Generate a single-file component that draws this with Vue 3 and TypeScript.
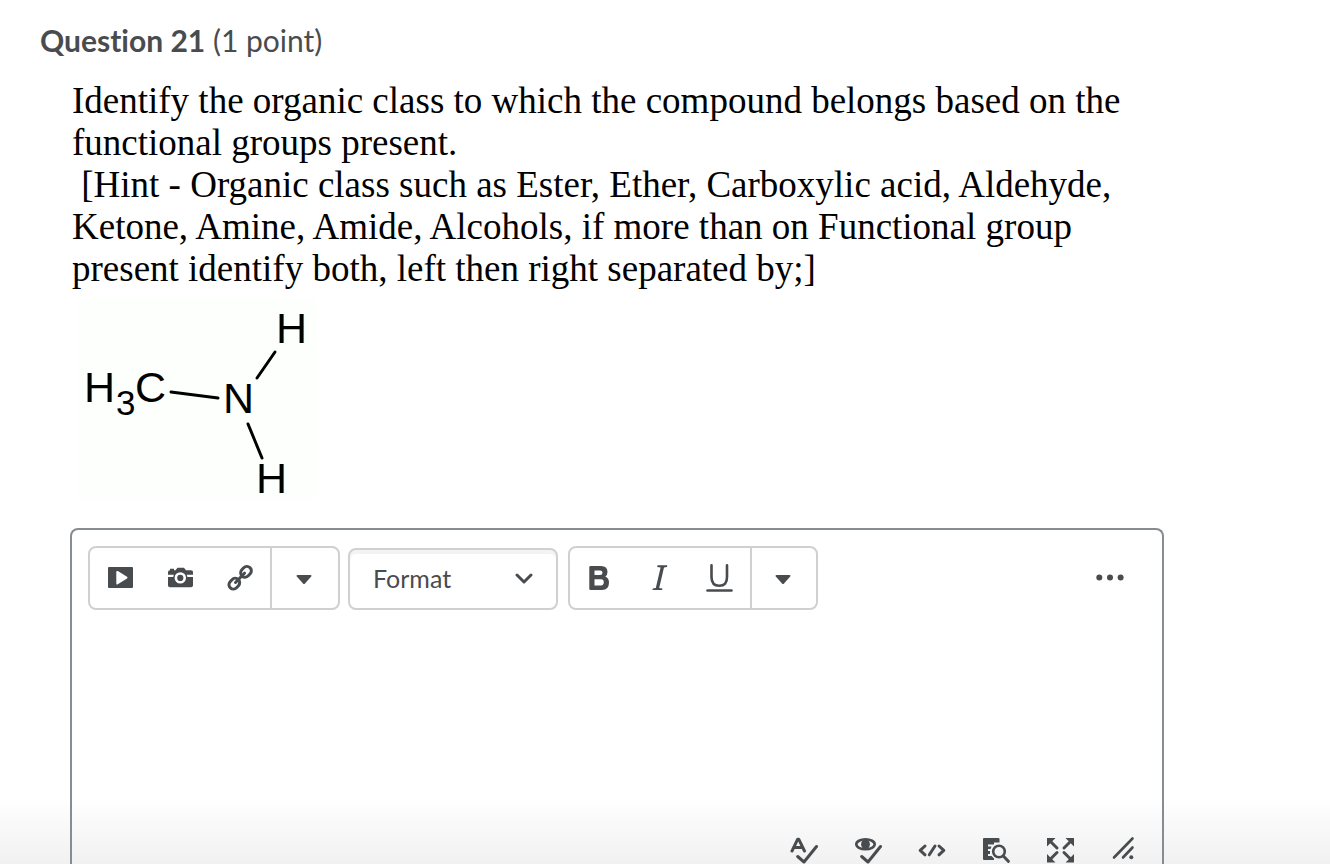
<script setup lang="ts">
import { ref } from 'vue'

const answer = ref('')
const format = ref('Format')
const formats: string[] = ['Format', 'Paragraph', 'Heading 1', 'Heading 2', 'Heading 3']
</script>

<template>
  <main class="page">
    <h2 class="title"><strong>Question 21</strong> (1 point)</h2>

    <section class="prompt">
      <p>Identify the organic class to which the compound belongs based on the functional groups present.</p>
      <p>&nbsp;[Hint - Organic class such as Ester, Ether, Carboxylic acid, Aldehyde, Ketone, Amine, Amide, Alcohols, if more than on Functional group present identify both, left then right separated by;]</p>
      <svg class="molecule" width="238" height="202" viewBox="0 0 238 202" role="img" aria-label="Methylamine structure">
        <rect width="238" height="202" fill="#fcfffc" />
        <g fill="#000" font-family="'Liberation Sans', Arial, sans-serif" font-size="43">
          <text x="6" y="104">H</text>
          <text x="38" y="117" font-size="35">3</text>
          <text x="57" y="104">C</text>
          <text x="145" y="115">N</text>
          <text x="198" y="45">H</text>
          <text x="178" y="195">H</text>
        </g>
        <g stroke="#000" stroke-width="3" stroke-linecap="round">
          <path d="M93 94L140 100" />
          <path d="M179 80L197 54" />
          <path d="M170 126L184 160" />
        </g>
      </svg>
    </section>

    <section class="editor">
      <div class="toolbar">
        <div class="group">
          <button type="button" aria-label="Insert stuff">
            <svg class="icon" viewBox="0 0 28 28">
              <path fill-rule="evenodd" d="M3 3H26Q27 3 27 4V23Q27 24 26 24H3Q2 24 2 23V4Q2 3 3 3ZM10.3 8V19.5Q10.3 21 11.8 20.2L21 14.6Q22.3 13.6 21 12.7L11.8 7.1Q10.3 6.4 10.3 8Z" />
            </svg>
          </button>
          <button type="button" aria-label="Insert image">
            <svg class="icon" viewBox="0 0 28 28">
              <path d="M2 10.8V8Q2 6.2 4 6.2V4.8H8V6.2H9.5L11.5 3.7H18L20 6.2H25Q27 6.2 27 8V10.8ZM2 13H27V21.5Q27 23.3 25 23.3H4Q2 23.3 2 21.5Z" />
              <circle cx="14.3" cy="13.9" r="7.2" />
              <circle class="lens" cx="14.3" cy="13.9" r="4.4" />
            </svg>
          </button>
          <button type="button" aria-label="Insert link">
            <svg class="icon" viewBox="0 0 28 28">
              <g class="line bold">
                <rect x="-5.8" y="-4.4" width="11.6" height="8.8" rx="4.4" transform="translate(8.3 19.7) rotate(-47)" />
                <rect x="-5.8" y="-4.4" width="11.6" height="8.8" rx="4.4" transform="translate(20 7.8) rotate(-47)" />
                <path d="M9.5 18.5L18.5 9.2" />
              </g>
            </svg>
          </button>
          <button type="button" class="more" aria-label="More insert options">
            <svg class="icon" viewBox="1 0 28 28"><path d="M7.5 11H20.5Q22.3 11 21.2 12.6L15 19.4Q14 20.4 13 19.4L6.8 12.6Q5.7 11 7.5 11Z" /></svg>
          </button>
        </div>

        <div class="format">
          <select v-model="format" aria-label="Format">
            <option v-for="name in formats" :key="name">{{ name }}</option>
          </select>
          <svg class="chevron" viewBox="0 0 18 12"><path d="M2 2L9 9L16 2" /></svg>
        </div>

        <div class="group">
          <button type="button" aria-label="Bold">
            <svg class="icon" viewBox="1 1 28 28">
              <path fill-rule="evenodd" d="M5.5 3H16Q22.5 3 22.5 9Q22.5 12.3 20.3 13.5Q24 15 24 19.6Q24 27 17 27H5.5Q4.3 27 4.3 25.8V4.2Q4.3 3 5.5 3ZM9.5 7.5V11.9H15Q17.5 11.9 17.5 9.7Q17.5 7.5 15 7.5ZM9.5 16.3V22.4H16Q18.8 22.4 18.8 19.3Q18.8 16.3 16 16.3Z" />
            </svg>
          </button>
          <button type="button" aria-label="Italic">
            <svg class="icon" viewBox="0 1 28 28">
              <path d="M11.5 2.3H21.3L21 3.9L18 4.6L13.2 25L16.4 25.6L16.1 27H6.4L6.8 25.6L9.8 25L14.6 4.6L11.2 3.9Z" />
            </svg>
          </button>
          <button type="button" aria-label="Underline">
            <svg class="icon" viewBox="1 0 28 28">
              <path class="line" d="M6.5 1.3V13Q6.5 21.7 14.3 21.7T22 13V1.3" />
              <path class="line" d="M2.5 26.5H26.5" />
            </svg>
          </button>
          <button type="button" class="more narrow" aria-label="More text styles">
            <svg class="icon" viewBox="1 0 28 28"><path d="M7.5 11H20.5Q22.3 11 21.2 12.6L15 19.4Q14 20.4 13 19.4L6.8 12.6Q5.7 11 7.5 11Z" /></svg>
          </button>
        </div>

        <button type="button" class="overflow" aria-label="More actions">
          <svg class="icon" viewBox="0 0 28 28">
            <circle cx="3.3" cy="13.5" r="3" /><circle cx="14" cy="13.5" r="3" /><circle cx="24.6" cy="13.5" r="3" />
          </svg>
        </button>
      </div>

      <textarea v-model="answer" class="answer" aria-label="Answer"></textarea>

      <div class="status">
        <button type="button" aria-label="Check spelling">
          <svg class="icon" viewBox="0 0 28 28">
            <g class="line bold"><path d="M2 15L7.7 3.2H8.7L14.5 15M4.5 11.5H12.5" /><path d="M7.7 20.5L14 26L26.5 10.5" /></g>
          </svg>
        </button>
        <button type="button" aria-label="Check accessibility">
          <svg class="icon" viewBox="0 0 28 28">
            <ellipse class="line" cx="11.5" cy="8.3" rx="9.2" ry="5" />
            <ellipse cx="11.5" cy="8.3" rx="4.4" ry="5.4" />
            <path class="line bold" d="M7.7 20.5L14 26L26.5 10.5" />
          </svg>
        </button>
        <button type="button" aria-label="HTML source">
          <svg class="icon" viewBox="0 0 28 28">
            <path class="line bold" d="M7 10L2.2 14.4L7 18.8M17 10L11.3 18.8M21 10L25.8 14.4L21 18.8" />
          </svg>
        </button>
        <button type="button" aria-label="Preview">
          <svg class="icon" viewBox="0 0 28 28">
            <path d="M2 2H16.5Q17.5 2 17.5 3V6.5H12V8.5H6V10.5H9.5L8.5 13H6V15H8V18H6V20H9.5L12 22.5V24H2Q1 24 1 23V3Q1 2 2 2Z" />
            <circle class="line" cx="17" cy="15.5" r="5.8" />
            <path class="line bold" d="M21.3 20L26.3 25.3" />
          </svg>
        </button>
        <button type="button" aria-label="Full screen">
          <svg class="icon" viewBox="0 0 28 28">
            <path d="M1 2H9.5L1 10.5ZM28 2H19.5L28 10.5ZM1 26.5H9.5L1 18ZM28 26.5H19.5L28 18Z" />
            <path class="line bold" d="M4 5L11 12M25 5L18 12M4 23.5L11 16.5M25 23.5L18 16.5" />
          </svg>
        </button>
        <button type="button" aria-label="Resize">
          <svg class="icon" viewBox="0 0 28 28">
            <path class="line" d="M4 21.5L22.5 2.5M13 21.5L22.5 11.5" /><circle cx="21.3" cy="21.3" r="2" />
          </svg>
        </button>
      </div>
    </section>
  </main>
</template>

<style>
body {
  margin: 0;
  background: #fff;
}
</style>

<style scoped>
* {
  box-sizing: border-box;
}
.page {
  display: flex;
  flex-direction: column;
  min-height: 100vh;
  padding: 22px 166px 0 40px;
  background: linear-gradient(to top, #f1f1f1, #fff 68px);
  color: #494c4e;
  font-family: Lato, 'Open Sans', sans-serif;
}
.title {
  margin: 0;
  font-size: 30px;
  line-height: 36px;
  font-weight: 400;
  font-variant-ligatures: none;
}
.title strong {
  font-weight: 700;
}
.prompt {
  margin: 22px 0 0 32px;
  color: #000;
  font-family: 'Liberation Serif', 'Times New Roman', serif;
  font-size: 37px;
  line-height: 42px;
}
.prompt p {
  margin: 0;
}
.molecule {
  display: block;
  overflow: visible;
  margin: 8px 0 0 6px;
}
.editor {
  display: flex;
  flex: 1;
  flex-direction: column;
  margin: 28px 0 0 30px;
  border: 2px solid #868c8f;
  border-bottom: 0;
  border-radius: 8px 8px 0 0;
}
.toolbar {
  display: flex;
  align-items: flex-end;
  padding: 16px 22px 0 16px;
  gap: 8px;
}
.group {
  display: flex;
  height: 64px;
  border: 2px solid #cfd0d1;
  border-radius: 8px;
  background: #fff;
}
button {
  display: flex;
  align-items: center;
  justify-content: center;
  padding: 0;
  border: 0;
  background: none;
  color: #494c4e;
}
.group button {
  width: 60px;
}
.group .more {
  width: 68px;
  border-left: 2px solid #cfd0d1;
}
.group .narrow {
  width: 66px;
}
.icon {
  display: block;
  width: 28px;
  height: 28px;
  fill: currentColor;
}
.line {
  fill: none;
  stroke: currentColor;
  stroke-width: 2.6;
  stroke-linecap: round;
  stroke-linejoin: round;
}
.bold {
  stroke-width: 3;
}
.lens {
  fill: none;
  stroke: #fff;
  stroke-width: 2.6;
}
.format {
  display: grid;
  align-items: center;
  width: 210px;
  height: 62px;
  margin-right: 2px;
}
.format select {
  grid-area: 1 / 1;
  width: 100%;
  height: 100%;
  padding: 0 24px 2px 23px;
  appearance: none;
  border: 2px solid #cfd0d1;
  border-radius: 8px;
  background: #fff;
  box-shadow: inset 0 4px 0 #f3f3f3;
  color: #494c4e;
  font-family: inherit;
  font-size: 25px;
}
.chevron {
  grid-area: 1 / 1;
  justify-self: end;
  width: 18px;
  height: 12px;
  margin-right: 25px;
  fill: none;
  stroke: #494c4e;
  stroke-width: 3;
  stroke-linecap: round;
  stroke-linejoin: round;
  pointer-events: none;
}
.overflow {
  width: 60px;
  height: 64px;
  margin-left: auto;
}
.answer {
  flex: 1;
  width: 100%;
  min-height: 200px;
  padding: 16px;
  border: 0;
  outline: 0;
  resize: none;
  background: none;
  font: inherit;
  font-size: 25px;
}
.status {
  display: flex;
  justify-content: flex-end;
  gap: 36px;
  padding-right: 24px;
}
</style>
